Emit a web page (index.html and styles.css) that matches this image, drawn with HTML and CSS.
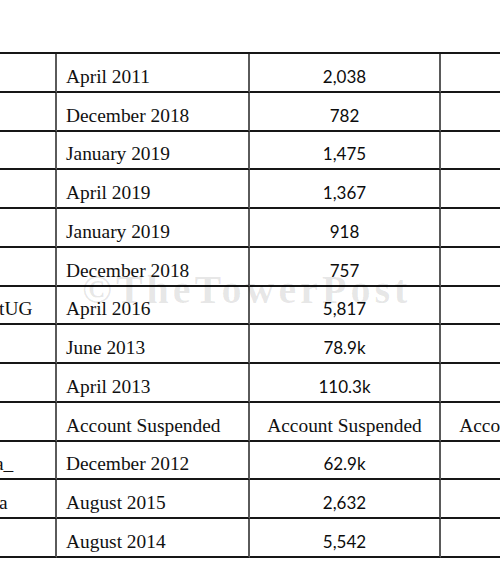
FILE: index.html
```html
<!DOCTYPE html>
<html>
<head>
<meta charset="utf-8">
<link rel="stylesheet" href="styles.css">
</head>
<body>
<div class="page">
  <div class="sheet">
    <div class="c name"></div><div class="c date">April 2011</div><div class="c num">2,038</div><div class="c last"></div>
    <div class="c name"></div><div class="c date">December 2018</div><div class="c num">782</div><div class="c last"></div>
    <div class="c name"></div><div class="c date">January 2019</div><div class="c num">1,475</div><div class="c last"></div>
    <div class="c name"></div><div class="c date">April 2019</div><div class="c num">1,367</div><div class="c last"></div>
    <div class="c name"></div><div class="c date">January 2019</div><div class="c num">918</div><div class="c last"></div>
    <div class="c name"></div><div class="c date">December 2018</div><div class="c num">757</div><div class="c last"></div>
    <div class="c name cut-t">tUG</div><div class="c date">April 2016</div><div class="c num">5,817</div><div class="c last"></div>
    <div class="c name"></div><div class="c date">June 2013</div><div class="c num">78.9k</div><div class="c last"></div>
    <div class="c name"></div><div class="c date">April 2013</div><div class="c num">110.3k</div><div class="c last"></div>
    <div class="c name"></div><div class="c date">Account Suspended</div><div class="c text">Account Suspended</div><div class="c last text">Account Suspended</div>
    <div class="c name cut-a">a_</div><div class="c date">December 2012</div><div class="c num">62.9k</div><div class="c last"></div>
    <div class="c name cut-s">a</div><div class="c date">August 2015</div><div class="c num">2,632</div><div class="c last"></div>
    <div class="c name"></div><div class="c date">August 2014</div><div class="c num">5,542</div><div class="c last"></div>
  </div>
  <div class="watermark">©TheTowerPost</div>
</div>
</body>
</html>
```

FILE: styles.css
```css
html, body {
  margin: 0;
  padding: 0;
  background: #ffffff;
  overflow: hidden;
}

.page {
  position: relative;
  width: 500px;
  height: 575px;
  overflow: hidden;
  padding-top: 52px;
  box-sizing: border-box;
  font-family: "Liberation Serif", "Times New Roman", serif;
  color: #111;
}

.sheet {
  display: grid;
  grid-template-columns: 57px 193px 191px 191px;
  grid-template-rows: repeat(13, 1fr);
  width: 632px;
  height: 506px;
  border-top: 2px solid #161616;
  box-sizing: border-box;
}

.c {
  display: flex;
  align-items: flex-end;
  border-bottom: 2px solid #161616;
  border-right: 2px solid #5a5a5a;
  box-sizing: border-box;
  font-size: 19.4px;
  line-height: 21px;
  padding-bottom: 4px;
  white-space: nowrap;
  overflow: hidden;
}

.name {
  justify-content: flex-start;
}

.cut-t { text-indent: -1px; }
.cut-a { text-indent: -5px; }
.cut-s { text-indent: -1px; }

.date {
  padding-left: 9px;
}

.num {
  justify-content: center;
  font-family: Lato, "Open Sans", sans-serif;
  font-size: 17px;
  padding-bottom: 4px;
  color: #0c0c0c;
}

.text {
  justify-content: center;
}

.last {
  border-right: none;
}

.watermark {
  position: absolute;
  left: 82px;
  top: 266px;
  font-family: "Liberation Serif", serif;
  font-size: 40px;
  font-weight: bold;
  letter-spacing: 4px;
  color: rgba(0, 0, 0, 0.1);
  white-space: nowrap;
  pointer-events: none;
}
```
